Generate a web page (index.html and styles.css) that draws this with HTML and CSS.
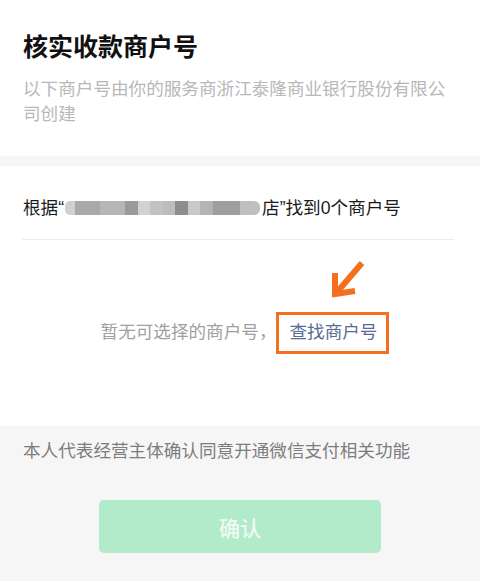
FILE: index.html
```html
<!DOCTYPE html>
<html lang="zh-CN">
<head>
<meta charset="utf-8">
<title>核实收款商户号</title>
<link rel="stylesheet" href="styles.css">
</head>
<body>
<div class="page">
  <section class="head">
    <h1 class="title">核实收款商户号</h1>
    <p class="desc">以下商户号由你的服务商浙江泰隆商业银行股份有限公司创建</p>
  </section>
  <section class="result">
    <div class="row">
      <p class="summary">根据“<span class="redact"><i></i><i></i><i></i><i></i><i></i><i></i><i></i><i></i><i></i><i></i><i></i><i></i></span>店”找到0个商户号</p>
    </div>
    <div class="empty">
      <span class="empty-text">暂无可选择的商户号，</span><span class="find">查找商户号<svg class="arrow" width="40" height="46" viewBox="0 0 40 46"><line x1="12" y1="35" x2="36" y2="7" stroke="#f3701f" stroke-width="6"/><polyline points="9,17 9,38 29,35" fill="none" stroke="#f3701f" stroke-width="6" stroke-linejoin="miter"/></svg></span>
    </div>
  </section>
  <section class="foot">
    <p class="agree">本人代表经营主体确认同意开通微信支付相关功能</p>
    <button class="confirm" type="button">确认</button>
  </section>
</div>
</body>
</html>
```
FILE: styles.css
```css
html, body {
  margin: 0;
  padding: 0;
}
body {
  background: #f6f6f6;
  font-family: "Liberation Sans", "Noto Sans CJK SC", sans-serif;
  width: 480px;
  height: 581px;
  overflow: hidden;
}
.page {
  display: flex;
  flex-direction: column;
}
.head {
  background: #fff;
  padding: 28px 23px 29.5px;
  margin-bottom: 10px;
}
.title {
  margin: 0 0 13.5px;
  font-family: "Noto Sans CJK SC", sans-serif;
  font-size: 25px;
  line-height: 35px;
  font-weight: 700;
  color: #111;
}
.desc {
  margin: 0;
  font-size: 17.6px;
  line-height: 25px;
  color: #b8b8b8;
}
.result {
  background: #fff;
  height: 260px;
  display: flex;
  flex-direction: column;
}
.row {
  margin: 0 26px 0 22px;
  padding: 30px 0 17.5px 1px;
  border-bottom: 1px solid #ededed;
}
.summary {
  margin: 0;
  font-size: 17.6px;
  line-height: 25px;
  color: #1a1a1a;
  white-space: nowrap;
}
.redact {
  display: inline-flex;
  height: 14px;
  margin: 0 2px 0 1px;
  vertical-align: -1px;
  filter: blur(0.6px);
}
.redact i {
  display: block;
  height: 14px;
}
.redact i:nth-child(1) { width: 10px; background: #d0d0d0; border-radius: 5px 0 0 5px; }
.redact i:nth-child(2) { width: 25px; background: #a9a9a9; }
.redact i:nth-child(3) { width: 25px; background: #b6b6b6; }
.redact i:nth-child(4) { width: 13px; background: #9a9a9a; }
.redact i:nth-child(5) { width: 12px; background: #d2d2d2; }
.redact i:nth-child(6) { width: 13px; background: #c2c2c2; }
.redact i:nth-child(7) { width: 12px; background: #bdbdbd; }
.redact i:nth-child(8) { width: 13px; background: #8e8e8e; }
.redact i:nth-child(9) { width: 12px; background: #c9c9c9; }
.redact i:nth-child(10) { width: 13px; background: #b4b4b4; }
.redact i:nth-child(11) { width: 27px; background: #9e9e9e; }
.redact i:nth-child(12) { width: 20px; background: #bfbfbf; border-radius: 0 6px 6px 0; }
.empty {
  flex: 1;
  display: flex;
  align-items: center;
  justify-content: center;
  padding-left: 10px;
  font-size: 17.6px;
  line-height: 25px;
}
.empty-text {
  color: #a0a0a0;
}
.find {
  position: relative;
  color: #576b95;
  border: 3px solid #f3701f;
  padding: 5.5px 9px 5.5px 10px;
}
.arrow {
  position: absolute;
  left: 47px;
  top: -59px;
}
.foot {
  padding-top: 13px;
}
.agree {
  margin: 0 23px;
  font-size: 17.6px;
  line-height: 25px;
  color: #7d7d7d;
}
.confirm {
  display: block;
  margin: 36px auto 0;
  width: 282px;
  height: 53px;
  border: none;
  border-radius: 5px;
  background: #b2ebca;
  color: rgba(255, 255, 255, 0.8);
  font-family: "Noto Sans CJK SC", sans-serif;
  font-size: 21px;
  font-weight: 500;
  padding: 0;
}
```
